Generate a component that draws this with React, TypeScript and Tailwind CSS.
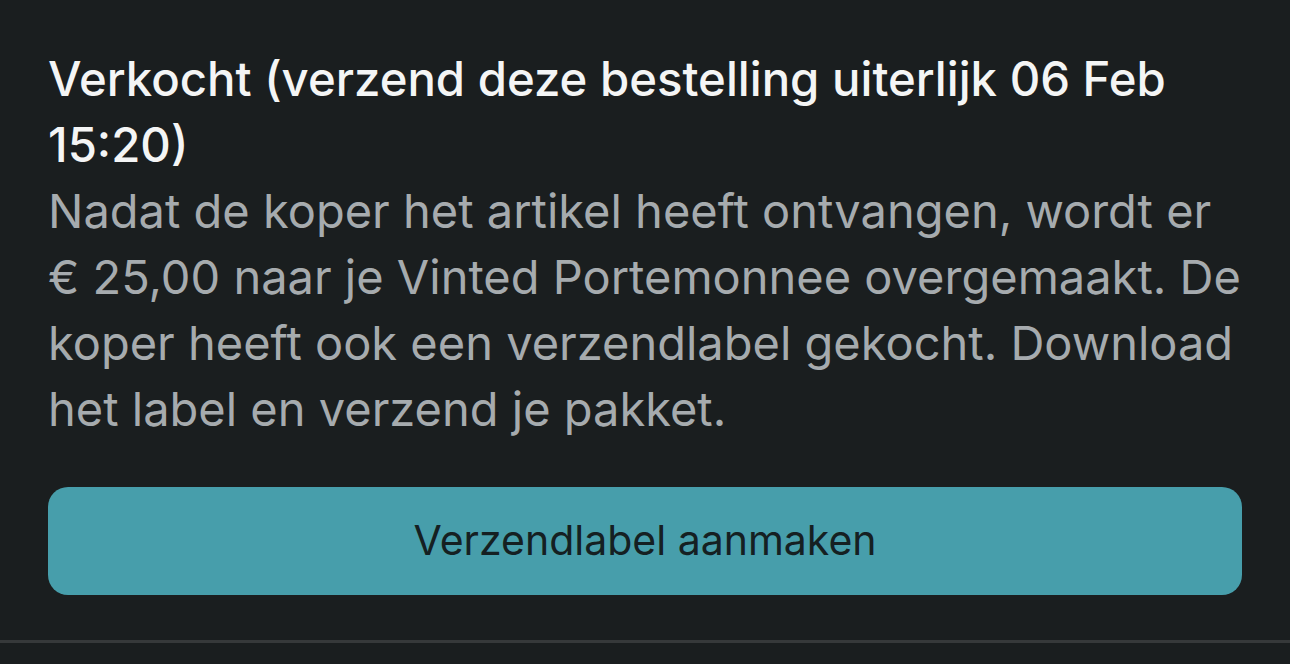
export default function App() {
  return (
    <div className="min-h-[664px] w-full bg-[#1a1e1f] font-['Inter',sans-serif]">
      <section className="px-12 pt-[46px] pb-[45px]">
        <h2 className="text-[47.3px] leading-[66px] font-medium text-[#f4f5f5]">
          Verkocht (verzend deze bestelling uiterlijk 06 Feb 15:20)
        </h2>
        <p className="text-[47px] leading-[66px] text-[#a6abae]">
          Nadat de koper het artikel heeft ontvangen, wordt er € 25,00 naar je
          Vinted Portemonnee overgemaakt. De koper heeft ook een verzendlabel
          gekocht. Download het label en verzend je pakket.
        </p>
        <button className="mt-[45px] flex h-[108px] w-full items-center justify-center rounded-[20px] bg-[#479eab] text-[41px] text-[#152022]">
          Verzendlabel aanmaken
        </button>
      </section>
      <div className="h-[3px] w-full bg-[#36393a]" />
    </div>
  );
}
